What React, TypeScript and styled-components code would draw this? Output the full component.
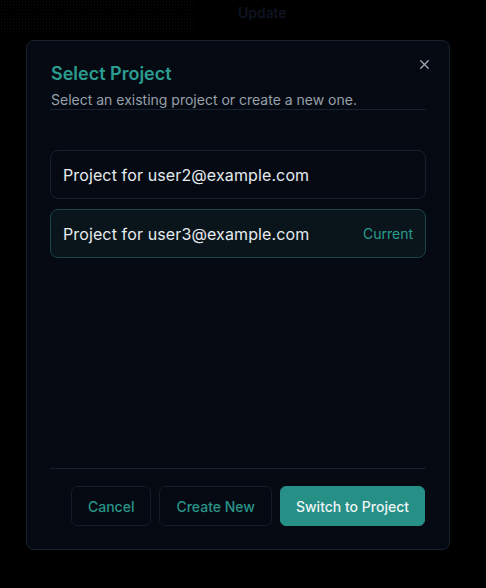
import React from "react";
import styled, { createGlobalStyle } from "styled-components";
import { X } from "lucide-react";

const Global = createGlobalStyle`
  html, body { margin: 0; padding: 0; background: #000; }
  body { font-family: Inter, "Noto Sans", sans-serif; -webkit-font-smoothing: antialiased; }
  * { box-sizing: border-box; }
`;

const Page = styled.div`
  width: 486px;
  height: 588px;
  background: #000;
  overflow: hidden;
`;

const BgHeader = styled.div`
  display: flex;
  align-items: flex-start;
  height: 34px;
`;

const Dots = styled.div`
  width: 195px;
  height: 33px;
  background-image: radial-gradient(circle, #070b14 0.7px, transparent 0.8px);
  background-size: 3px 3px;
`;

const BgLabel = styled.span`
  margin-left: 43px;
  margin-top: 4px;
  font-size: 14px;
  line-height: 18px;
  color: #0f1624;
  font-weight: 500;
`;

const Overlay = styled.div`
  position: fixed;
  inset: 0;
  display: flex;
  align-items: flex-start;
  padding: 40px 0 0 26px;
`;

const Dialog = styled.div`
  position: relative;
  width: 424px;
  height: 510px;
  background: #050a12;
  border: 1px solid #172230;
  border-radius: 8px;
  display: flex;
  flex-direction: column;
  padding: 19px 23px 23px 23px;
`;

const Header = styled.div`
  display: flex;
  flex-direction: column;
  border-bottom: 1px solid #172230;
`;

const Title = styled.h2`
  margin: 0;
  font-size: 18px;
  line-height: 28px;
  font-weight: 600;
  color: #2a9d90;
  padding-left: 1px;
`;

const Subtitle = styled.p`
  margin: 3px 0 0 0;
  font-size: 14px;
  line-height: 18px;
  color: #97a0ab;
  padding-left: 1px;
`;

const CloseButton = styled.button`
  position: absolute;
  top: 14px;
  right: 16px;
  width: 18px;
  height: 18px;
  padding: 0;
  border: none;
  background: transparent;
  color: #a3abb6;
  display: flex;
  align-items: center;
  justify-content: center;
`;

const List = styled.div`
  flex: 1;
  display: flex;
  flex-direction: column;
  gap: 10px;
  padding-top: 40px;
`;

const Item = styled.div<{ $current?: boolean }>`
  display: flex;
  align-items: center;
  justify-content: space-between;
  height: 49px;
  padding: 0 12px;
  border-radius: 8px;
  border: 1px solid ${(p) => (p.$current ? "#1b4446" : "#16212c")};
  background: ${(p) => (p.$current ? "#0a151b" : "#050a12")};
`;

const ItemName = styled.span`
  font-size: 16px;
  line-height: 24px;
  letter-spacing: 0.12px;
  color: #e6ebef;
`;

const CurrentTag = styled.span`
  font-size: 14px;
  line-height: 20px;
  color: #2a9d90;
`;

const Footer = styled.div`
  display: flex;
  justify-content: flex-end;
  gap: 8px;
  border-top: 1px solid #172230;
  padding-top: 17px;
  padding-right: 1px;
`;

const Button = styled.button<{ $primary?: boolean }>`
  height: 40px;
  padding: 0 ${(p) => (p.$primary ? "15px" : "16px")};
  border-radius: 6px;
  font-family: Inter, "Noto Sans", sans-serif;
  font-size: 14px;
  font-weight: 500;
  border: 1px solid ${(p) => (p.$primary ? "#268f86" : "#131c27")};
  background: ${(p) => (p.$primary ? "#268f86" : "#050a12")};
  color: ${(p) => (p.$primary ? "#eef5f4" : "#2a9488")};
`;

export default function App() {
  return (
    <Page>
      <Global />
      <BgHeader>
        <Dots />
        <BgLabel>Update</BgLabel>
      </BgHeader>
      <Overlay>
        <Dialog>
          <CloseButton aria-label="Close">
            <X size={15} strokeWidth={2} />
          </CloseButton>
          <Header>
            <Title>Select Project</Title>
            <Subtitle>Select an existing project or create a new one.</Subtitle>
          </Header>
          <List>
            <Item>
              <ItemName>Project for user2@example.com</ItemName>
            </Item>
            <Item $current>
              <ItemName>Project for user3@example.com</ItemName>
              <CurrentTag>Current</CurrentTag>
            </Item>
          </List>
          <Footer>
            <Button>Cancel</Button>
            <Button>Create New</Button>
            <Button $primary>Switch to Project</Button>
          </Footer>
        </Dialog>
      </Overlay>
    </Page>
  );
}
